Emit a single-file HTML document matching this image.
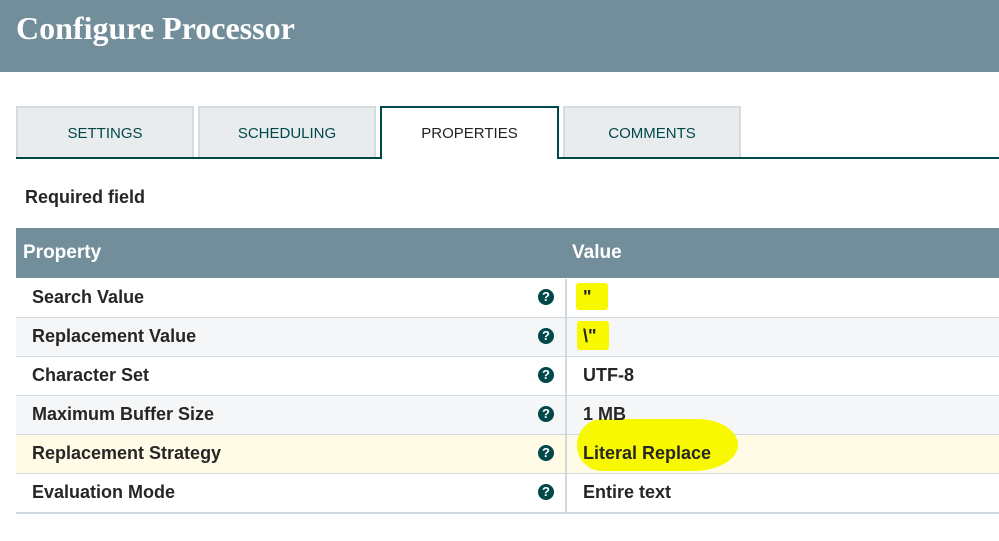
<!DOCTYPE html>
<html><head><style>
body{margin:0;width:999px;height:541px;overflow:hidden;background:#fff;font-family:"Liberation Sans",sans-serif;position:relative}
.hdr{position:absolute;left:0;top:0;width:999px;height:72px;background:#728e9b}
.hdr span{position:absolute;left:16px;top:10px;color:#fff;font-family:"Liberation Serif",serif;font-weight:bold;font-size:32px}
.line{position:absolute;left:16px;top:157px;width:983px;height:2px;background:#004849}
.tab{position:absolute;top:106px;height:51px;background:#e9ecee;border:2px solid #d4dcdf;border-bottom:none;box-sizing:border-box;text-align:center;line-height:52px;font-size:15px;color:#004849}
.tab.act{background:#fff;border:2px solid #004849;border-bottom:none;height:53px;color:#222}
.req{position:absolute;left:25px;top:187px;font-size:18px;font-weight:bold;color:#262626}
.th{position:absolute;left:16px;top:228px;width:983px;height:50px;background:#728e9b;color:#fff;font-weight:bold;font-size:19px}
.row{position:absolute;left:16px;width:983px;height:38px;border-bottom:2px solid #cfd9de;font-size:18px;font-weight:bold;color:#262626}
.row .n{position:absolute;left:16px;top:8px}
.row .d{position:absolute;left:549px;top:0;width:2px;height:40px;background:#cfd9de}
.q{position:absolute;left:522px;top:10px;width:16px;height:16px;border-radius:50%;background:#004849;color:#fff;font-size:13px;line-height:16px;text-align:center;font-weight:bold}
.hl{position:absolute;background:#f8f800}
.v{position:absolute;left:583px;font-size:18px;font-weight:bold;color:#262626}
</style></head><body>
<div class="hdr"><span>Configure Processor</span></div>
<div class="tab" style="left:16px;width:178px">SETTINGS</div>
<div class="tab" style="left:198px;width:178px">SCHEDULING</div>
<div class="tab" style="left:563px;width:178px">COMMENTS</div>
<div class="line"></div>
<div class="tab act" style="left:380px;width:179px">PROPERTIES</div>
<div class="req">Required field</div>
<div class="th"><span style="position:absolute;left:7px;top:14px">Property</span><span style="position:absolute;left:556px;top:14px">Value</span></div>
<div class="row" style="top:279px;background:#fff"><span class="n">Search Value</span><span class="q">?</span><div class="d"></div></div>
<div class="row" style="top:318px;background:#f4f6f7"><span class="n">Replacement Value</span><span class="q">?</span><div class="d"></div></div>
<div class="row" style="top:357px;background:#fff"><span class="n">Character Set</span><span class="q">?</span><div class="d"></div></div>
<div class="row" style="top:396px;background:#f4f6f7"><span class="n">Maximum Buffer Size</span><span class="q">?</span><div class="d"></div></div>
<div class="row" style="top:435px;background:#fffbe6"><span class="n">Replacement Strategy</span><span class="q">?</span><div class="d"></div></div>
<div class="row" style="top:474px;background:#fff"><span class="n">Evaluation Mode</span><span class="q">?</span><div class="d"></div></div>
<div class="hl" style="left:576px;top:283px;width:32px;height:27px;border-radius:3px"></div>
<div class="hl" style="left:577px;top:321px;width:32px;height:29px;border-radius:3px"></div>
<div class="hl" style="left:577px;top:419px;width:161px;height:52px;border-radius:25px 40px 45px 25px / 26px 26px 26px 26px"></div>
<div class="v" style="top:287px">"</div>
<div class="v" style="top:326px">\"</div>
<div class="v" style="top:365px">UTF-8</div>
<div class="v" style="top:404px">1 MB</div>
<div class="v" style="top:443px">Literal Replace</div>
<div class="v" style="top:482px">Entire text</div>
</body></html>
